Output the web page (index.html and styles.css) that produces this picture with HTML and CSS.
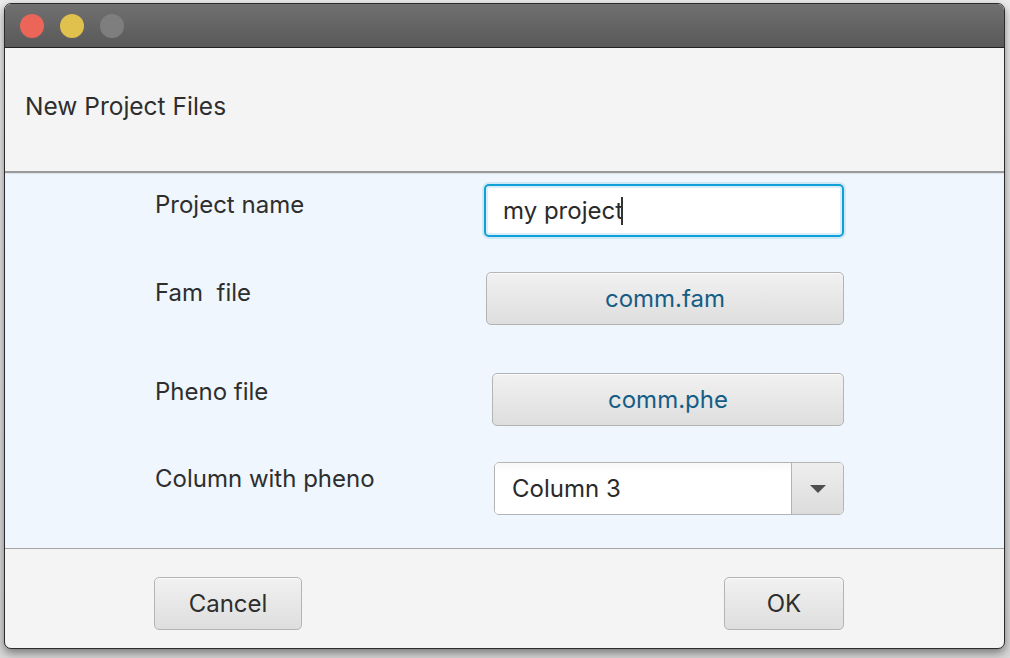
FILE: index.html
```html
<!DOCTYPE html>
<html>
<head>
<meta charset="utf-8">
<link rel="stylesheet" href="styles.css">
</head>
<body>
<div class="window">
  <div class="titlebar">
    <span class="light red"></span>
    <span class="light yellow"></span>
    <span class="light gray"></span>
  </div>
  <div class="header">New Project Files</div>
  <div class="content">
    <div class="row row1">
      <div class="label">Project name</div>
      <div class="field w360"><span class="value">my project</span><span class="caret"></span></div>
    </div>
    <div class="row row2">
      <div class="label pre">Fam  file</div>
      <div class="btn filebtn w358">comm.fam</div>
    </div>
    <div class="row row3">
      <div class="label">Pheno file</div>
      <div class="btn filebtn w352">comm.phe</div>
    </div>
    <div class="row row4">
      <div class="label">Column with pheno</div>
      <div class="combo w350">
        <div class="combo-value">Column 3</div>
        <div class="combo-arrow"><span class="tri"></span></div>
      </div>
    </div>
  </div>
  <div class="footer">
    <div class="btn cancel">Cancel</div>
    <div class="btn ok">OK</div>
  </div>
</div>
</body>
</html>
```

FILE: styles.css
```css
* { box-sizing: border-box; }
html, body { margin: 0; padding: 0; }
body {
  width: 1010px;
  height: 658px;
  background: linear-gradient(#ececec, #d8d8d8);
  font-family: Inter, "Liberation Sans", sans-serif;
  color: #333;
  overflow: hidden;
  padding: 3px 0 0 4px;
}
.window {
  width: 1001px;
  height: 646px;
  border: 1px solid #2c2c2c;
  border-radius: 7px;
  overflow: hidden;
  background: #f4f4f4;
  box-shadow: 0 4px 10px rgba(0,0,0,0.45);
  display: flex;
  flex-direction: column;
}
.titlebar {
  height: 44px;
  flex: none;
  background: linear-gradient(#707070, #595959);
  border-bottom: 1px solid #222;
  display: flex;
  align-items: center;
  gap: 16px;
  padding-left: 15px;
}
.light {
  width: 24px;
  height: 24px;
  border-radius: 50%;
  display: block;
}
.red { background: #ec6559; }
.yellow { background: #e0c14d; }
.gray { background: #7e7e7e; }
.header {
  height: 123px;
  flex: none;
  padding: 43px 0 0 20px;
  font-size: 24.5px;
  color: #2e2e2e;
}
.content {
  flex: none;
  height: 378px;
  background: #eff6fd;
  border-top: 2px solid #9a9a9a;
  border-bottom: 1px solid #a4a4a4;
  box-shadow: inset 0 1px 1px rgba(0,0,0,0.08);
  padding: 11px 160px 0 150px;
  display: flex;
  flex-direction: column;
}
.row {
  height: 53px;
  display: flex;
  justify-content: space-between;
  align-items: flex-start;
}
.row2 { margin-top: 35px; }
.row3 { margin-top: 48px; }
.row4 { margin-top: 36px; }
.label {
  font-size: 24px;
  line-height: 29px;
  padding-top: 6px;
  color: #2e2e2e;
}
.row3 .label { padding-top: 4px; }
.row4 .label { padding-top: 2px; }
.pre { white-space: pre; }
.w360 { width: 360px; }
.w358 { width: 358px; }
.w352 { width: 352px; }
.w350 { width: 350px; }
.field {
  height: 53px;
  background: #fff;
  border: 2px solid #10a0d8;
  border-radius: 5px;
  box-shadow: inset 0 0 0 2px #d9eefa, 0 0 0 2px #cfe8f6;
  display: flex;
  align-items: center;
  padding-left: 17px;
  font-size: 24px;
  color: #2a2a2a;
}
.caret {
  display: inline-block;
  width: 1.5px;
  height: 28px;
  background: #333;
  margin-left: -2px;
}
.btn {
  height: 53px;
  border: 1px solid #b4b4b4;
  border-radius: 5px;
  background: linear-gradient(#f1f1f1, #dedede);
  box-shadow: inset 0 1px 0 #fafafa;
  display: flex;
  align-items: center;
  justify-content: center;
  font-size: 24px;
}
.filebtn { color: #165d86; }
.combo {
  height: 53px;
  border: 1px solid #b4b4b4;
  border-radius: 5px;
  overflow: hidden;
  background: #fff;
  display: flex;
}
.combo-value {
  flex: 1;
  display: flex;
  align-items: center;
  padding-left: 17px;
  font-size: 24px;
  color: #2a2a2a;
  background: linear-gradient(#f8f8f8, #ffffff 20%);
}
.combo-arrow {
  width: 52px;
  border-left: 1px solid #b4b4b4;
  background: linear-gradient(#eeeeee, #dcdcdc);
  display: flex;
  align-items: center;
  justify-content: center;
}
.tri {
  width: 0;
  height: 0;
  border-left: 8px solid transparent;
  border-right: 8px solid transparent;
  border-top: 8px solid #4f4f4f;
}
.footer {
  flex: 1;
  padding: 28px 160px 0 149px;
  display: flex;
  justify-content: space-between;
  align-items: flex-start;
}
.cancel { width: 148px; color: #2e2e2e; }
.ok { width: 120px; color: #2e2e2e; }
```
